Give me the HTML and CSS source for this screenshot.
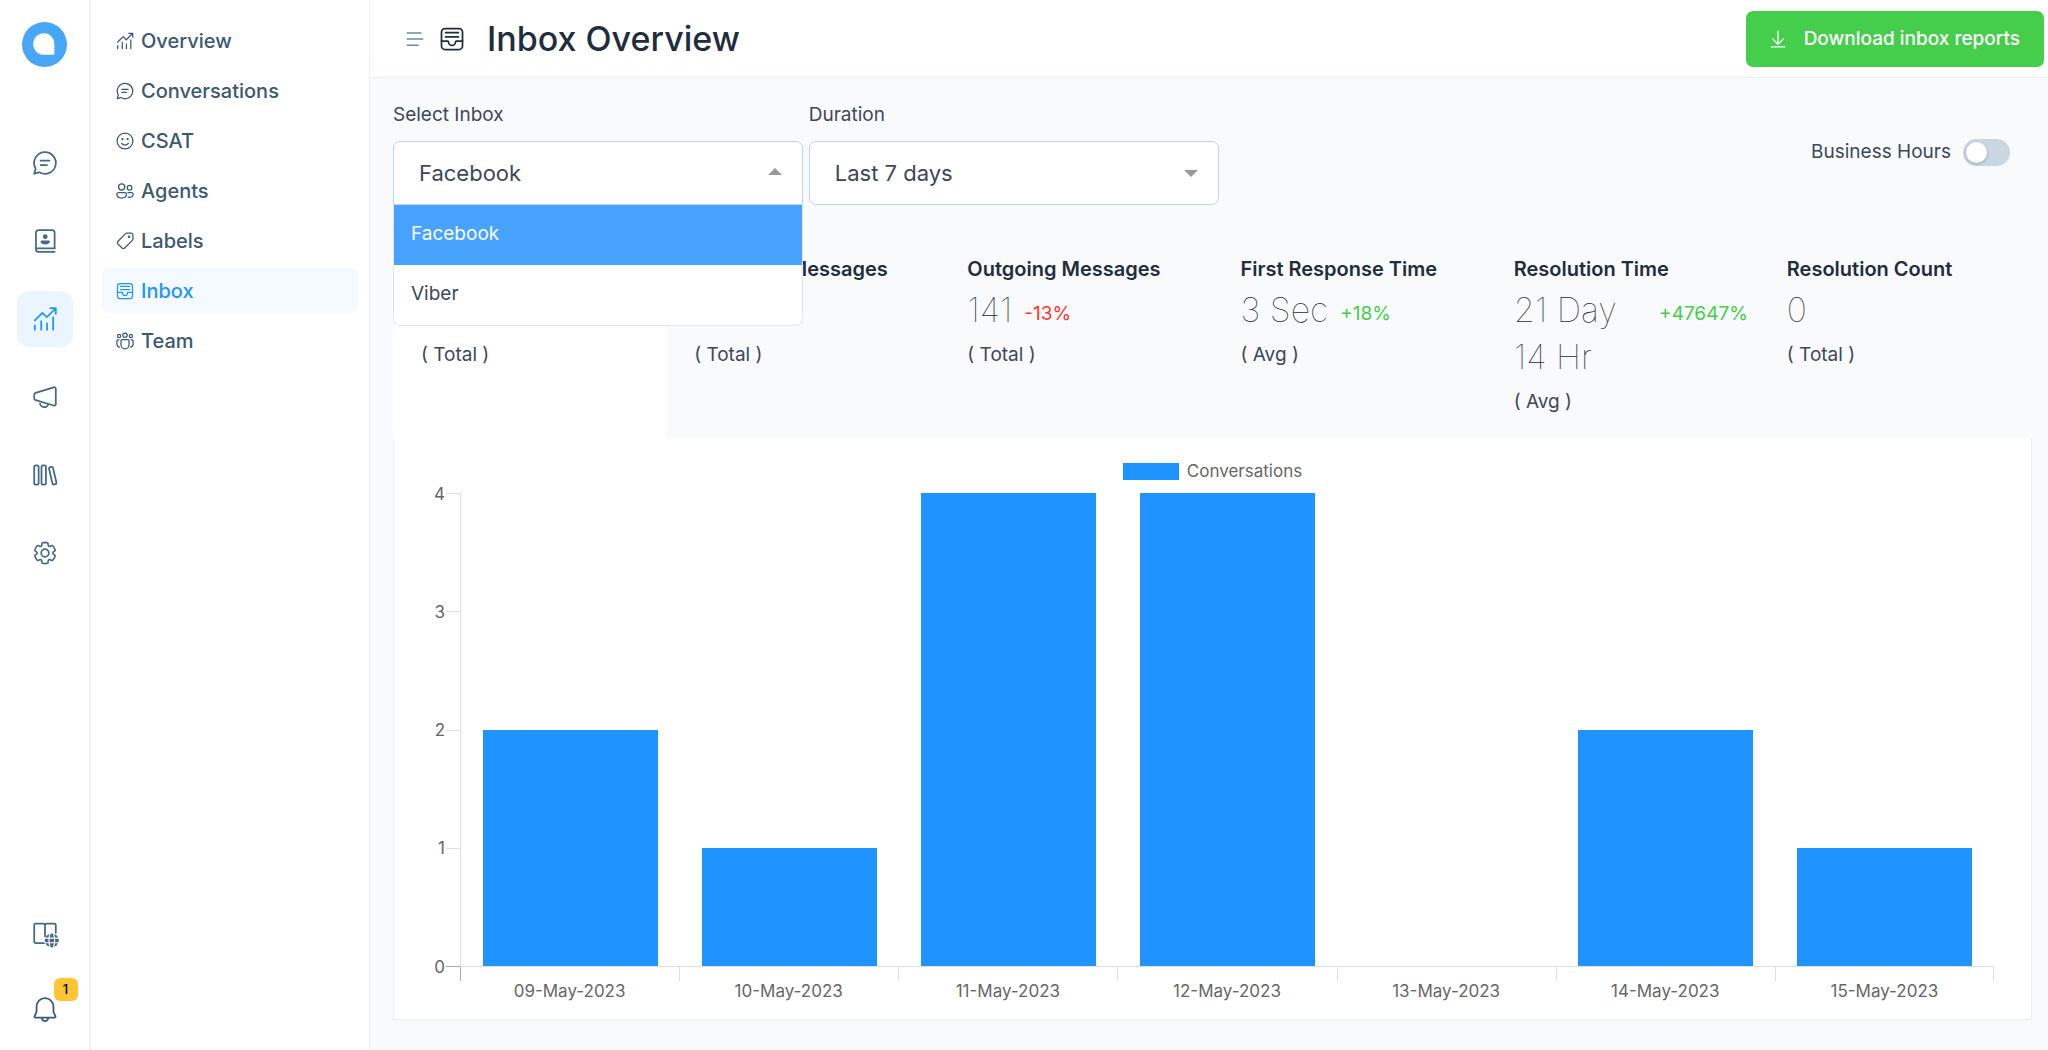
FILE: index.html
```html
<!DOCTYPE html>
<html lang="en">
<head>
<meta charset="utf-8">
<meta name="viewport" content="width=device-width, initial-scale=1">
<title>Inbox Overview</title>
<link rel="stylesheet" href="styles.css">
</head>
<body>
<svg class="sprite" aria-hidden="true">
  <symbol id="i-chat" viewBox="0 0 24 24"><path d="M12 2.75a9.25 9.25 0 1 1-4.35 17.4c-.3-.15-.65-.2-1-.1L2.75 21.2l1.1-3.9c.1-.35.05-.7-.1-1A9.25 9.25 0 0 1 12 2.75zM8.25 10h7.5M8.25 13.75h5.5"/></symbol>
  <symbol id="i-contacts" viewBox="0 0 24 24"><path d="M20.5 18.25H4.25M20.25 18V5a2.25 2.25 0 0 0-2.25-2.25H6.5A2.25 2.25 0 0 0 4.25 5v14a2.25 2.25 0 0 0 2.25 2.25h13.75"/><circle class="fill" cx="12.2" cy="8.3" r="2"/><path class="fill" d="M9.2 11.5h6a1 1 0 0 1 1 1c0 1.500-1.600 2.500-4 2.500s-4-1-4-2.500a1 1 0 0 1 1-1z"/></symbol>
  <symbol id="i-trend" viewBox="0 0 24 24"><path d="M3.25 17.500v3.750M8.750 13.750v7.500M13.750 15.750v5.500M19 10.500v10.750M3.250 13.250l6.500-6.500 3.750 3.750L21 3M16.500 2.750h4.750V7.500"/></symbol>
  <symbol id="i-megaphone" viewBox="0 0 24 24"><path d="M19.400 3.700 4 8.400a1.800 1.800 0 0 0-1.250 1.700v2.900A1.800 1.800 0 0 0 4 14.700l15.400 4.600a1.400 1.400 0 0 0 1.850-1.400V5.100a1.400 1.400 0 0 0-1.850-1.400zM7.900 16.100a3.600 3.600 0 0 0 7 2"/></symbol>
  <symbol id="i-library" viewBox="0 0 24 24"><rect x="2.750" y="3.750" width="3.800" height="16.500" rx="1.400"/><rect x="9" y="3.750" width="3.800" height="16.500" rx="1.400"/><rect x="16.900" y="5" width="3.500" height="15.200" rx="1.300" transform="rotate(-13 18.650 12.600)"/></symbol>
  <symbol id="i-gear" viewBox="0 0 24 24"><path transform="translate(.84 .84) scale(.93)" d="M12.012 2.250c.734.008 1.466.093 2.182.253a.75.75 0 0 1 .582.649l.17 1.527a1.384 1.384 0 0 0 1.927 1.116l1.401-.615a.75.75 0 0 1 .85.174 9.792 9.792 0 0 1 2.204 3.792.75.75 0 0 1-.271.825l-1.242.916a1.381 1.381 0 0 0 0 2.226l1.243.915a.75.75 0 0 1 .272.826 9.797 9.797 0 0 1-2.204 3.792.75.75 0 0 1-.848.175l-1.407-.617a1.380 1.380 0 0 0-1.926 1.114l-.169 1.526a.75.75 0 0 1-.572.647 9.518 9.518 0 0 1-4.406 0 .75.75 0 0 1-.572-.647l-.168-1.524a1.382 1.382 0 0 0-1.926-1.110l-1.406.616a.75.75 0 0 1-.849-.175 9.798 9.798 0 0 1-2.204-3.796.75.75 0 0 1 .272-.826l1.243-.916a1.380 1.380 0 0 0 0-2.226l-1.243-.914a.75.75 0 0 1-.271-.826 9.793 9.793 0 0 1 2.204-3.792.75.75 0 0 1 .85-.174l1.400.615a1.387 1.387 0 0 0 1.930-1.118l.17-1.526a.75.75 0 0 1 .583-.65c.717-.159 1.450-.243 2.201-.252z"/><circle cx="12" cy="12" r="3.250"/></symbol>
  <symbol id="i-book-globe" viewBox="0 0 24 24"><path d="M11.500 19.750H4a1.250 1.250 0 0 1-1.250-1.250V4.250A1.250 1.250 0 0 1 4 3h6.750A1.250 1.250 0 0 1 12 4.250V14M12 4.250A1.250 1.250 0 0 1 13.250 3H20a1.250 1.250 0 0 1 1.250 1.250V11"/><circle class="fill" cx="17.800" cy="17.500" r="6"/><path class="cut" d="M11.500 15.500h12.500M11.500 19.500h12.500M16.300 11.500c-1.200 4-1.200 8 0 12M19.300 11.500c1.200 4 1.200 8 0 12"/></symbol>
  <symbol id="i-bell" viewBox="0 0 24 24"><path d="M12 2.750A7.250 7.250 0 0 0 4.750 10v4.500L3 18.400a.7.7 0 0 0 .65.950h16.700a.7.7 0 0 0 .65-.95l-1.750-3.900V10A7.250 7.250 0 0 0 12 2.750zM9.200 19.500a2.800 2.800 0 0 0 5.600 0"/></symbol>
  <symbol id="i-smile" viewBox="0 0 24 24"><circle cx="12" cy="12" r="9.500"/><path d="M8 14.800a5 5 0 0 0 8 0"/><circle class="fill" cx="8.900" cy="9.800" r="1.300"/><circle class="fill" cx="15.100" cy="9.800" r="1.300"/></symbol>
  <symbol id="i-people" viewBox="0 0 24 24"><circle cx="8" cy="7.200" r="3.700"/><circle cx="17.500" cy="8" r="2.800"/><path d="M4.250 14h7.500a2 2 0 0 1 2 2c0 3-2.500 4.500-5.750 4.500S2.250 19 2.250 16a2 2 0 0 1 2-2zM15.500 14h4.500a1.800 1.800 0 0 1 1.800 1.800c0 2.700-2.300 4.200-6 3.600"/></symbol>
  <symbol id="i-tag" viewBox="0 0 24 24"><path d="M19.750 2.500h-5.400a2.250 2.250 0 0 0-1.600.650l-9.200 9.200a2.250 2.250 0 0 0 0 3.200l4.900 4.900a2.250 2.250 0 0 0 3.200 0l9.200-9.200a2.250 2.250 0 0 0 .65-1.600V4.500a2 2 0 0 0-1.750-2z"/><circle class="fill" cx="16.900" cy="7" r="1.500"/></symbol>
  <symbol id="i-inbox" viewBox="0 0 24 24"><rect x="3" y="3" width="18" height="18" rx="3"/><path d="M3 13.750h5.250c.4 0 .75.35.75.75a3 3 0 0 0 6 0c0-.4.35-.75.75-.75H21M6.500 6.500h11M6.500 10.250h11"/></symbol>
  <symbol id="i-team" viewBox="0 0 24 24"><circle cx="12" cy="5" r="2.600"/><circle cx="4.900" cy="6" r="1.900"/><circle cx="19.100" cy="6" r="1.900"/><path d="M8.500 10.200h7a1.300 1.300 0 0 1 1.300 1.300v5a4.800 4.800 0 0 1-9.600 0v-5a1.300 1.300 0 0 1 1.300-1.300zM4.800 10.500H3.600a1.300 1.300 0 0 0-1.300 1.300v3.700a4 4 0 0 0 3 3.800M19.200 10.500h1.200a1.300 1.300 0 0 1 1.300 1.300v3.700a4 4 0 0 1-3 3.800"/></symbol>
  <symbol id="i-menu" viewBox="0 0 24 24"><path d="M3.500 5.500h15M3.500 12h17M3.500 18.750h12"/></symbol>
  <symbol id="i-download" viewBox="0 0 24 24"><path d="M12 2.500v15.500M5.750 12l6.250 6.250L18.250 12M4 21.500h16"/></symbol>
</svg>

<div class="app">
  <nav class="rail" aria-label="Primary">
    <a class="logo" href="#" aria-label="Home">
      <svg viewBox="0 0 45 45" aria-hidden="true"><circle cx="22.500" cy="22.500" r="22.500" fill="#47a7f6"/><path fill="#fff" d="M22 11.200a10.700 10.700 0 0 0 0 21.600h9.200a1.200 1.200 0 0 0 1.200-1.200V22A10.600 10.600 0 0 0 22 11.200z"/></svg>
    </a>
    <a class="rail-item" href="#" aria-label="Conversations"><svg class="icon"><use href="#i-chat"/></svg></a>
    <a class="rail-item" href="#" aria-label="Contacts"><svg class="icon"><use href="#i-contacts"/></svg></a>
    <a class="rail-item active" href="#" aria-label="Reports"><svg class="icon"><use href="#i-trend"/></svg></a>
    <a class="rail-item" href="#" aria-label="Campaigns"><svg class="icon"><use href="#i-megaphone"/></svg></a>
    <a class="rail-item" href="#" aria-label="Help Center"><svg class="icon"><use href="#i-library"/></svg></a>
    <a class="rail-item" href="#" aria-label="Settings"><svg class="icon"><use href="#i-gear"/></svg></a>
    <div class="rail-bottom">
      <a class="rail-item" href="#" aria-label="Docs"><svg class="icon"><use href="#i-book-globe"/></svg></a>
      <a class="rail-item bell" href="#" aria-label="Notifications"><svg class="icon"><use href="#i-bell"/></svg><span class="badge">1</span></a>
    </div>
  </nav>

  <nav class="side" aria-label="Reports">
    <a class="side-item" href="#"><svg class="icon"><use href="#i-trend"/></svg>Overview</a>
    <a class="side-item" href="#"><svg class="icon"><use href="#i-chat"/></svg>Conversations</a>
    <a class="side-item" href="#"><svg class="icon"><use href="#i-smile"/></svg>CSAT</a>
    <a class="side-item" href="#"><svg class="icon"><use href="#i-people"/></svg>Agents</a>
    <a class="side-item" href="#"><svg class="icon"><use href="#i-tag"/></svg>Labels</a>
    <a class="side-item active" href="#"><svg class="icon"><use href="#i-inbox"/></svg>Inbox</a>
    <a class="side-item" href="#"><svg class="icon"><use href="#i-team"/></svg>Team</a>
  </nav>

  <main class="main">
    <header class="topbar">
      <button class="menu-toggle" type="button" aria-label="Toggle menu"><svg class="icon"><use href="#i-menu"/></svg></button>
      <svg class="icon title-icon"><use href="#i-inbox"/></svg>
      <h1>Inbox Overview</h1>
      <button class="download" type="button"><svg class="icon"><use href="#i-download"/></svg>Download inbox reports</button>
    </header>

    <div class="content">
      <div class="filters">
        <div class="field">
          <label for="inbox">Select Inbox</label>
          <div class="select open">
            <select id="inbox"><option selected>Facebook</option><option>Viber</option></select>
            <ul class="options" role="listbox" aria-label="Inboxes">
              <li class="highlight" role="option" aria-selected="true">Facebook</li>
              <li role="option" aria-selected="false">Viber</li>
            </ul>
          </div>
        </div>
        <div class="field">
          <label for="duration">Duration</label>
          <div class="select">
            <select id="duration"><option>Last 7 days</option></select>
          </div>
        </div>
        <div class="hours">
          <label for="hours">Business Hours</label>
          <input id="hours" class="switch" type="checkbox" role="switch">
        </div>
      </div>

      <div class="metrics">
        <section class="metric active">
          <h2>Conversations</h2>
          <p class="value"></p>
          <p class="kind">( Total )</p>
        </section>
        <section class="metric">
          <h2>Incoming Messages</h2>
          <p class="value"></p>
          <p class="kind">( Total )</p>
        </section>
        <section class="metric">
          <h2>Outgoing Messages</h2>
          <p class="value"><span>141</span><em class="down">-13%</em></p>
          <p class="kind">( Total )</p>
        </section>
        <section class="metric">
          <h2>First Response Time</h2>
          <p class="value"><span>3 Sec</span><em class="up">+18%</em></p>
          <p class="kind">( Avg )</p>
        </section>
        <section class="metric">
          <h2>Resolution Time</h2>
          <p class="value"><span>21 Day 14 Hr</span><em class="up">+47647%</em></p>
          <p class="kind">( Avg )</p>
        </section>
        <section class="metric">
          <h2>Resolution Count</h2>
          <p class="value"><span>0</span></p>
          <p class="kind">( Total )</p>
        </section>
      </div>

      <figure class="chart">
        <figcaption class="legend"><i class="swatch"></i>Conversations</figcaption>
        <ol class="y-axis"><li>4</li><li>3</li><li>2</li><li>1</li><li class="zero">0</li></ol>
        <div class="plot">
          <div class="slot"><div class="bar" style="height:50%"></div></div>
          <div class="slot"><div class="bar" style="height:25%"></div></div>
          <div class="slot"><div class="bar" style="height:100%"></div></div>
          <div class="slot"><div class="bar" style="height:100%"></div></div>
          <div class="slot"></div>
          <div class="slot"><div class="bar" style="height:50%"></div></div>
          <div class="slot"><div class="bar" style="height:25%"></div></div>
        </div>
        <div class="ticks"><i></i><i></i><i></i><i></i><i></i><i></i><i></i></div>
        <div class="x-axis"><span>09-May-2023</span><span>10-May-2023</span><span>11-May-2023</span><span>12-May-2023</span><span>13-May-2023</span><span>14-May-2023</span><span>15-May-2023</span></div>
      </figure>
    </div>
  </main>
</div>
</body>
</html>
```

FILE: styles.css
```css
:root {
  --blue: #1f93ff;
  --green: #44ce4b;
  --red: #ff382d;
  --ink: #1f2d3d;
  --text: #3c4858;
  --slate: #3c5873;
  --line: #ebf0f5;
  --page: #f8fafc;
  --axis: #e0e0e0;
}

* { box-sizing: border-box; }

body {
  margin: 0;
  font: 400 19px/28px Inter, "Liberation Sans", sans-serif;
  color: var(--text);
  background: #fff;
}

h1, h2, p, ul, ol, figure { margin: 0; padding: 0; }
ul, ol { list-style: none; }
a { color: inherit; text-decoration: none; }
button, select { font: inherit; color: inherit; border: 0; margin: 0; }

.sprite { position: absolute; width: 0; height: 0; }

.icon {
  flex: none;
  width: 28px;
  height: 28px;
  fill: none;
  stroke: currentColor;
  stroke-width: 1.5;
  stroke-linecap: round;
  stroke-linejoin: round;
}
.fill { fill: currentColor; stroke: none; }
.cut { stroke: #fff; stroke-width: 1; }

.app { display: flex; min-height: 100vh; }

/* Icon rail */
.rail {
  flex: none;
  width: 91px;
  display: flex;
  flex-direction: column;
  align-items: center;
  gap: 22px;
  padding: 22px 0 13px;
  border-right: 2px solid var(--line);
  color: #446888;
}
.logo { width: 45px; height: 45px; margin-bottom: 46px; }
.logo svg { display: block; }
.rail-item {
  display: grid;
  place-items: center;
  width: 56px;
  height: 56px;
  border-radius: 12px;
}
.rail-item.active { background: #ebf5ff; color: var(--blue); }
.rail-bottom {
  display: flex;
  flex-direction: column;
  gap: 19px;
  margin-top: auto;
}
.bell { position: relative; color: var(--slate); }
.badge {
  position: absolute;
  top: -3px;
  right: -5px;
  width: 24px;
  height: 23px;
  border-radius: 6px;
  background: #ffc532;
  color: #000;
  font-size: 13px;
  font-weight: 500;
  line-height: 23px;
  text-align: center;
}

/* Section menu */
.side {
  flex: none;
  width: 279px;
  display: flex;
  flex-direction: column;
  gap: 5px;
  padding: 18px 11px;
  border-right: 1px solid var(--line);
}
.side-item {
  display: flex;
  align-items: center;
  gap: 6px;
  height: 45px;
  padding-left: 13px;
  border-radius: 6px;
  color: var(--slate);
  font-size: 20px;
  font-weight: 500;
}
.side-item .icon { width: 20px; height: 20px; }
.side-item.active { background: #f5faff; color: var(--blue); }

/* Main column */
.main {
  flex: 1;
  min-width: 0;
  display: flex;
  flex-direction: column;
  background: var(--page);
}
.topbar {
  display: flex;
  align-items: center;
  height: 78px;
  padding: 0 4px 0 34px;
  border-bottom: 1px solid var(--line);
  background: #fff;
  color: var(--ink);
}
.menu-toggle { display: flex; padding: 0; background: none; color: #6f8aa3; }
.menu-toggle .icon { width: 22px; height: 22px; }
.title-icon { margin-left: 12px; }
.topbar h1 {
  margin-left: 21px;
  font-size: 34px;
  font-weight: 500;
  line-height: 44px;
}
.download {
  display: flex;
  align-items: center;
  gap: 16px;
  height: 56px;
  margin-left: auto;
  padding: 0 24px 0 22px;
  border-radius: 7px;
  background: var(--green);
  color: #fff;
  font-weight: 500;
}
.download .icon { width: 20px; height: 20px; }

.content {
  flex: 1;
  display: flex;
  flex-direction: column;
  padding: 23px 16px 30px 23px;
}

/* Filters */
.filters { display: flex; gap: 6px; }
.field { width: 25%; }
.field > label { display: block; margin-bottom: 12px; line-height: 28px; }
.select { position: relative; }
.select select {
  display: block;
  width: 100%;
  height: 64px;
  padding: 0 60px 0 25px;
  border: 1px solid #c3d3e2;
  border-radius: 7px;
  background: #fff;
  font-size: 22px;
  appearance: none;
}
.select::after {
  content: "";
  position: absolute;
  top: 29px;
  right: 21px;
  border: 7px solid transparent;
  border-top-color: #999;
  border-bottom: 0;
}
.select.open::after {
  top: 27px;
  border-top: 0;
  border-bottom: 7px solid #999;
}
.select.open select { border-radius: 7px 7px 0 0; }
.options {
  position: absolute;
  z-index: 1;
  top: 100%;
  left: 0;
  right: 0;
  border: 1px solid #e4e6e8;
  border-top: 0;
  border-radius: 0 0 7px 7px;
  background: #fff;
}
.options li { height: 60px; padding-left: 17px; line-height: 57px; }
.options .highlight { background: #47a3ff; color: #fff; }

.hours {
  display: flex;
  align-items: center;
  gap: 12px;
  height: 56px;
  margin: 23px 22px 0 auto;
}
.switch {
  appearance: none;
  width: 47px;
  height: 27px;
  margin: 0;
  padding: 3px;
  border-radius: 14px;
  background: #c9d7e3;
}
.switch::before {
  content: "";
  display: block;
  width: 21px;
  height: 21px;
  border-radius: 50%;
  background: #fff;
  box-shadow: 0 1px 3px rgba(31, 45, 61, .3);
}

/* Metrics */
.metrics {
  display: grid;
  grid-template-columns: repeat(6, 1fr);
  margin-top: 34px;
}
.metric { min-width: 0; padding: 16px 11px 22px 28px; }
.metric.active { background: #fff; }
.metric h2 { color: var(--ink); font-size: 20px; font-weight: 600; line-height: 28px; white-space: nowrap; }
.value {
  display: flex;
  min-height: 47px;
  color: var(--ink);
  font-size: 34px;
  font-weight: 100;
  line-height: 47px;
  margin-top: 3px;
}
.value em {
  margin: 9px 0 0 12px;
  font-size: 19px;
  font-style: normal;
  font-weight: 400;
  line-height: 38px;
}
.up { color: var(--green); }
.down { color: var(--red); }
.kind { margin-top: 8px; }

/* Chart */
.chart {
  flex: 1;
  display: grid;
  grid-template: 55px 1fr 14px 38px / 66px 1fr;
  padding-right: 37px;
  border: 1px solid var(--line);
  border-top: 0;
  background: #fff;
  color: #666;
  font-size: 17px;
  line-height: 20px;
}
.legend {
  grid-column: 1 / -1;
  display: flex;
  justify-content: center;
  align-items: center;
  gap: 8px;
  height: 20px;
  margin: 23px 0 0 37px;
}
.swatch { width: 56px; height: 17px; background: var(--blue); }
.y-axis {
  display: flex;
  flex-direction: column;
  justify-content: space-between;
}
.y-axis li {
  display: flex;
  align-items: center;
  justify-content: flex-end;
  gap: 1px;
  height: 1px;
}
.y-axis li::after { content: ""; width: 14px; height: 1px; background: var(--axis); }
.y-axis .zero::after { background: #aaa; }
.plot, .x-axis, .ticks {
  grid-column: 2;
  display: grid;
  grid-template-columns: repeat(7, 1fr);
}
.plot { border-left: 1px solid var(--axis); border-bottom: 1px solid var(--axis); }
.slot { display: flex; align-items: flex-end; justify-content: center; }
.bar { width: 80%; background: var(--blue); }
.ticks i { border-left: 1px solid var(--axis); }
.ticks i:first-child { border-color: #aaa; }
.ticks i:last-child { border-right: 1px solid var(--axis); }
.x-axis span { text-align: center; }
```
